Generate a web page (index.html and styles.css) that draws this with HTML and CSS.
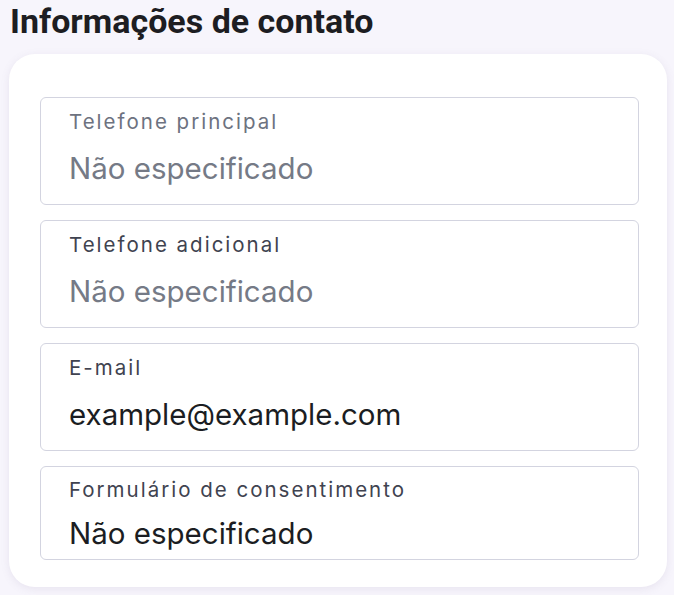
FILE: index.html
```html
<!DOCTYPE html>
<html lang="pt">
<head>
    <meta charset="UTF-8">
    <meta name="viewport" content="width=device-width, initial-scale=1.0">
    <title>Informações de contato</title>
    <link rel="stylesheet" href="styles.css">
</head>
<body>
    <h1 class="title">Informações de contato</h1>

    <div class="card">
        <div class="field">
            <div class="label">Telefone principal</div>
            <div class="value empty">Não especificado</div>
        </div>
        <div class="field">
            <div class="label dark">Telefone adicional</div>
            <div class="value empty">Não especificado</div>
        </div>
        <div class="field">
            <div class="label dark">E-mail</div>
            <div class="value">example@example.com</div>
        </div>
        <div class="field short">
            <div class="label dark">Formulário de consentimento</div>
            <div class="value">Não especificado</div>
        </div>
    </div>
</body>
</html>
```

FILE: styles.css
```css
body {
    margin: 0;
    background: #f7f5fc;
    font-family: Inter, "Noto Sans", sans-serif;
    width: 674px;
    height: 595px;
    overflow: hidden;
}

.title {
    margin: 0;
    padding: 1px 0 0 10px;
    font-family: Roboto, Inter, sans-serif;
    font-size: 34px;
    line-height: 40px;
    font-weight: 700;
    color: #1d1d22;
}

.card {
    margin: 13px 7px 0 9px;
    background: #fff;
    border-radius: 26px;
    padding: 43px 28px 27px 31px;
    display: flex;
    flex-direction: column;
    gap: 15px;
    box-shadow: 0 2px 8px rgba(120, 110, 150, 0.12);
}

.field {
    border: 1.5px solid #d3d4e0;
    border-radius: 6px;
    height: 108px;
    box-sizing: border-box;
    padding: 10.5px 28px 0;
}

.field.short {
    height: 94px;
    padding-top: 10px;
}

.label {
    font-size: 20.5px;
    color: #6d7280;
    letter-spacing: 2px;
    line-height: 25px;
}

.label.dark {
    color: #3f4350;
}

.value {
    margin-top: 16px;
    font-size: 29.5px;
    color: #1b1d22;
    line-height: 36px;
}

.value.empty {
    color: #757a86;
}

.short .value {
    margin-top: 12.5px;
}
```
